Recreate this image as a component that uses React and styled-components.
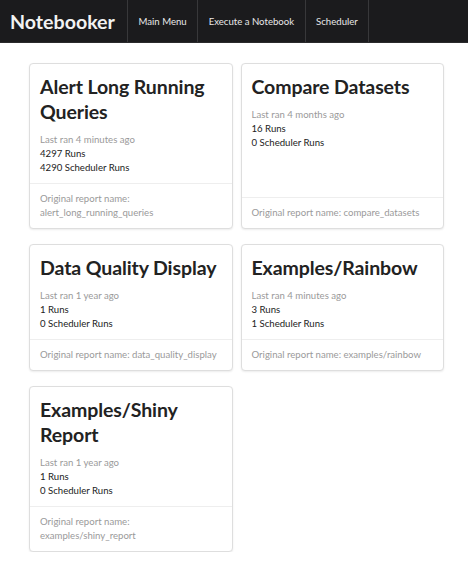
import React from "react"
import styled, { createGlobalStyle } from "styled-components"

const reports = [
  {
    title: "Alert Long Running Queries",
    lastRan: "4 minutes ago",
    runs: 4297,
    schedulerRuns: 4290,
    name: "alert_long_running_queries",
  },
  {
    title: "Compare Datasets",
    lastRan: "4 months ago",
    runs: 16,
    schedulerRuns: 0,
    name: "compare_datasets",
  },
  {
    title: "Data Quality Display",
    lastRan: "1 year ago",
    runs: 1,
    schedulerRuns: 0,
    name: "data_quality_display",
  },
  {
    title: "Examples/Rainbow",
    lastRan: "4 minutes ago",
    runs: 3,
    schedulerRuns: 1,
    name: "examples/rainbow",
  },
  {
    title: "Examples/Shiny Report",
    lastRan: "1 year ago",
    runs: 1,
    schedulerRuns: 0,
    name: "examples/shiny_report",
  },
]

const navItems = ["Main Menu", "Execute a Notebook", "Scheduler"]

function App() {
  return (
    <>
      <GlobalStyle />
      <Navbar>
        <Brand>Notebooker</Brand>
        {navItems.map((item, i) => (
          <NavItem key={item} last={i === navItems.length - 1}>
            {item}
          </NavItem>
        ))}
      </Navbar>
      <Grid>
        {reports.map(report => (
          <Card key={report.name}>
            <CardBody>
              <Title>{report.title}</Title>
              <Meta muted>Last ran {report.lastRan}</Meta>
              <Meta>{report.runs} Runs</Meta>
              <Meta>{report.schedulerRuns} Scheduler Runs</Meta>
            </CardBody>
            <CardFooter>Original report name: {report.name}</CardFooter>
          </Card>
        ))}
      </Grid>
    </>
  )
}
export default App

const GlobalStyle = createGlobalStyle`
  body {
    margin: 0;
    background: #ffffff;
    font-family: Lato, "Open Sans", sans-serif;
    color: #222;
  }
`
const Navbar = styled.div`
  display: flex;
  align-items: stretch;
  height: 43px;
  background: #1b1b1d;
  border-bottom: 1px solid #2a2a2c;
  box-sizing: border-box;
`
const Brand = styled.div`
  display: flex;
  align-items: center;
  width: 127px;
  box-sizing: border-box;
  padding-left: 10px;
  font-size: 19.6px;
  font-weight: 700;
  color: #f2f2f2;
`
const NavItem = styled.div`
  display: flex;
  align-items: center;
  padding: 0 10.5px;
  font-size: 9.6px;
  color: #e8e8e8;
  border-left: 1px solid #38383a;
  border-right: ${p => (p.last ? "1px solid #38383a" : "none")};
`
const Grid = styled.div`
  display: grid;
  grid-template-columns: 1fr 1fr;
  column-gap: 8px;
  row-gap: 15px;
  width: 415px;
  margin: 20px 0 0 29px;
`
const Card = styled.div`
  display: flex;
  flex-direction: column;
  border: 1px solid #dedede;
  border-radius: 4px;
  box-shadow: 0 1px 2px rgba(0, 0, 0, 0.08);
  background: #fff;
`
const CardBody = styled.div`
  flex: 1;
  padding: 10px 10px 8px;
  border-bottom: 1px solid #eeeeee;
`
const Title = styled.div`
  font-size: 19.5px;
  letter-spacing: -0.1px;
  font-weight: 700;
  line-height: 25px;
  color: #222;
  margin-bottom: 9px;
`
const Meta = styled.div`
  font-size: 9.6px;
  line-height: 14px;
  color: ${p => (p.muted ? "#9a9a9a" : "#222")};
`
const CardFooter = styled.div`
  padding: 8px 10px;
  font-size: 9.6px;
  line-height: 14px;
  color: #9a9a9a;
`
